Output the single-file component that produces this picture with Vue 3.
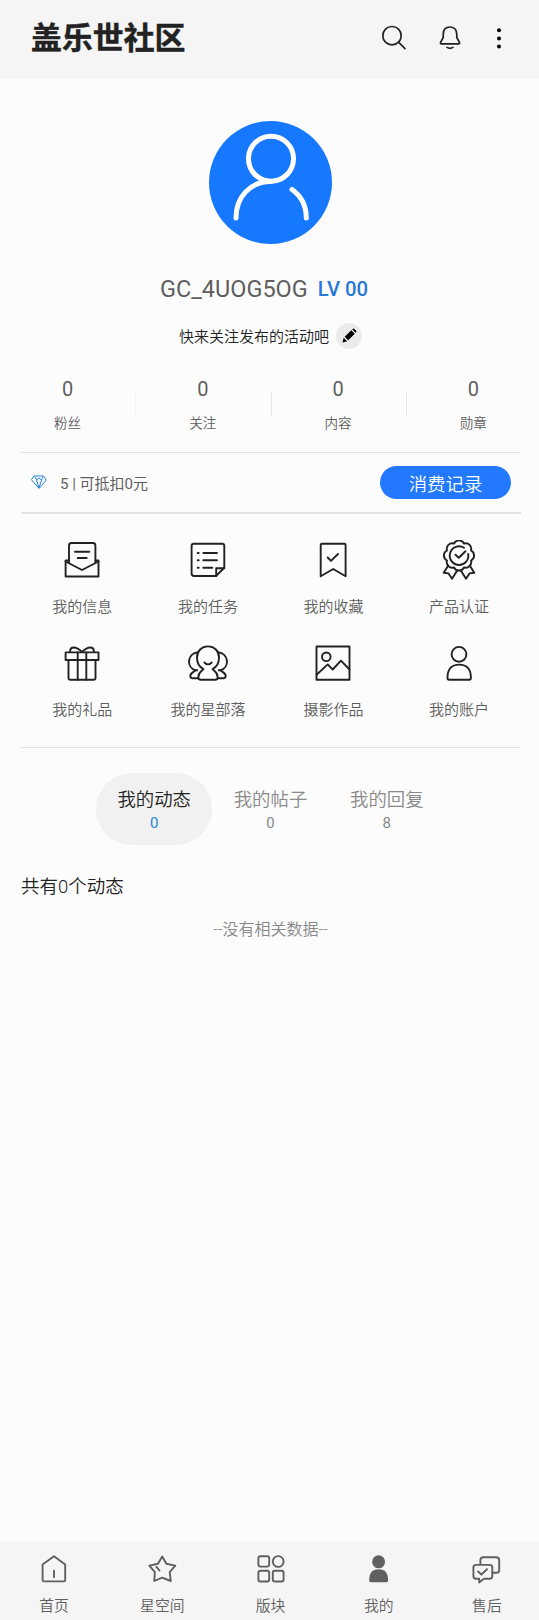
<script setup>
import { ref } from "vue";

const stats = [
  { label: "粉丝", value: 0 },
  { label: "关注", value: 0 },
  { label: "内容", value: 0 },
  { label: "勋章", value: 0 },
];

const menus = [
  {
    label: "我的信息",
    paths: [
      "M7 22.5V5.5Q7 3 9.5 3H31Q33.4 3 33.4 5.5V22.5",
      "M7 20.5H3.6V36.5H36.5V20.5H33.4",
      "M3.6 21.5L20 30L36.5 21.5",
      "M13 11.8H27.3M15.7 18H24.7",
    ],
  },
  {
    label: "我的任务",
    paths: [
      "M28 36H6Q3.6 36 3.6 33.6V6Q3.6 3.8 6 3.8H34Q36.3 3.8 36.3 6V27.8Z",
      "M28.2 36V28.2H36.3",
      "M9.7 13H10.7M15.3 13H29M9.7 20.3H10.7M15.3 20.3H29M9.7 27.7H10.7M15.3 27.7H24.3",
    ],
  },
  {
    label: "我的收藏",
    paths: ["M7.7 36.3V5Q7.7 3.7 9 3.7H31.4Q32.6 3.7 32.6 5V36.3L20.2 29Z", "M14.7 17.5L18 20.9L25 14"],
  },
  {
    label: "产品认证",
    paths: [
      "M15 3.5A5.6 5.6 0 0 1 25 3.5A5.6 5.6 0 0 1 32 10.5A5.6 5.6 0 0 1 32 20.5A5.6 5.6 0 0 1 25 27.5A5.6 5.6 0 0 1 15 27.5A5.6 5.6 0 0 1 8 20.5A5.6 5.6 0 0 1 8 10.5A5.6 5.6 0 0 1 15 3.5",
      "M25 7.8A9.3 9.3 0 1 0 29.2 14",
      "M16.5 14.7L19.8 17.7L26.5 11.3",
      "M9.3 25.5L4.7 32.7L9.5 33.4L13 38.7L18.5 30",
      "M30.7 25.5L35.3 32.7L30.5 33.4L27 38.7L21.5 30",
    ],
  },
  {
    label: "我的礼品",
    paths: [
      "M3.6 9.4H36.5V17H3.6Z",
      "M6.5 17V35.3Q6.5 36.7 8 36.7H32Q33.5 36.7 33.5 35.3V17",
      "M15.7 9.4V36.7M24.3 9.4V36.7",
      "M8 9C8 3 14 3 20 9C26 3 32 3 32 9",
    ],
  },
  {
    label: "我的星部落",
    paths: [
      "M15.3 26C11.5 24 9 19.3 9 14.5C9 8 13.5 3.4 20 3.4S31 8 31 14.5C31 19.3 28.5 24 24.7 26",
      "M15.3 26C13.5 29 10.3 29 10.3 34.5Q10.3 36.8 13 36.8H27Q29.7 36.8 29.7 34.5C29.7 29 26.5 29 24.7 26",
      "M16.4 19.5Q20 23.3 23.7 19.5",
      "M10 9.3C-1 10.5 -2 24.5 7.7 27.3C5 29.5 2.3 30 2.3 33Q2.3 35.2 4.5 35.2H10",
      "M30 9.3C41 10.5 42 24.5 32.3 27.3C35 29.5 37.7 30 37.7 33Q37.7 35.2 35.5 35.2H30",
      "M7.7 27.3H9.3M30.7 27.3H32.3",
    ],
  },
  {
    label: "摄影作品",
    paths: [
      "M3.5 3.5H36.5V36.8H3.5Z",
      "M17.6 13.8A4.3 4.3 0 1 1 9 13.8A4.3 4.3 0 1 1 17.6 13.8",
      "M3.6 31.7L14.7 21.4L19.7 26.5L28 17.7L36.5 26.5",
    ],
  },
  {
    label: "我的账户",
    paths: [
      "M27.4 11.3A7.4 7.4 0 1 1 12.6 11.3A7.4 7.4 0 1 1 27.4 11.3",
      "M8.5 35C8.5 26 12.5 21.6 20.2 21.6S31.9 26 31.9 35Q31.9 36.7 30.3 36.7H10.1Q8.5 36.7 8.5 35Z",
    ],
  },
];

const tabs = [
  { label: "我的动态", count: 0 },
  { label: "我的帖子", count: 0 },
  { label: "我的回复", count: 8 },
];
const activeTab = ref(0);

const navs = [
  {
    label: "首页",
    paths: ["M15 2.3L26.2 10.5V26Q26.2 27.4 24.8 27.4H5Q3.6 27.4 3.6 26V10.5Z", "M15 16.8V23.2"],
  },
  {
    label: "星空间",
    paths: [
      "M15.2 2.5L19.4 9.8L28.3 11.6L22.7 18.2L23.8 27L15.2 23.6L7.2 27L7.9 18.2L2.3 11.6L11 9.8Z",
      "M9.5 12.8L12.5 16.5",
    ],
  },
  {
    label: "版块",
    paths: [
      "M4.4 2.3H11.2Q13.2 2.3 13.2 4.3V10.6Q13.2 12.6 11.2 12.6H4.4Q2.4 12.6 2.4 10.6V4.3Q2.4 2.3 4.4 2.3Z",
      "M4.4 16.7H11.2Q13.2 16.7 13.2 18.7V25.5Q13.2 27.5 11.2 27.5H4.4Q2.4 27.5 2.4 25.5V18.7Q2.4 16.7 4.4 16.7Z",
      "M18.8 16.7H25.6Q27.6 16.7 27.6 18.7V25.5Q27.6 27.5 25.6 27.5H18.8Q16.8 27.5 16.8 25.5V18.7Q16.8 16.7 18.8 16.7Z",
      "M27.6 7.5A5.4 5.4 0 1 1 16.8 7.5A5.4 5.4 0 1 1 27.6 7.5",
    ],
  },
  {
    label: "我的",
    filled: true,
    paths: [
      "M21.1 7.8A6.5 6.5 0 1 1 8.1 7.8A6.5 6.5 0 1 1 21.1 7.8",
      "M5.2 26.5C5.2 19 8 15.2 14.6 15.2S24.1 19 24.1 26.5Q24.1 28.2 22.5 28.2H6.8Q5.2 28.2 5.2 26.5Z",
    ],
  },
  {
    label: "售后",
    paths: [
      "M8.4 10V6.2Q8.4 3.3 11.3 3.3H24.3Q27.2 3.3 27.2 6.2V15.9Q27.2 18.8 24.3 18.8H20.5",
      "M4 10.9H17.6Q20.3 10.9 20.3 13.6V22Q20.3 24.7 17.6 24.7H12L7.2 28.4V24.7H4Q1.4 24.7 1.4 22V13.6Q1.4 10.9 4 10.9Z",
      "M6 17.5L9.4 20.5L15 15.2",
    ],
  },
];
</script>

<template>
  <div class="page">
    <header class="header">
      <h1>盖乐世社区</h1>
      <div class="header__icons">
        <svg width="28" height="28" viewBox="0 0 28 28">
          <circle cx="12" cy="12.7" r="9.2" />
          <path d="M18.7 19.4L25 25.7" />
        </svg>
        <svg width="28" height="28" viewBox="0 0 28 28">
          <path d="M14 4C9 4 7.2 7.7 7.2 11.5V14.5L4.6 19.4Q4 20.9 5.5 20.9H22.5Q24 20.9 23.4 19.4L20.8 14.5V11.5C20.8 7.7 19 4 14 4Z" />
          <path d="M11 24.4Q14 26.3 17 24.4" />
        </svg>
        <svg class="more" width="10" height="28" viewBox="0 0 10 28">
          <circle cx="5" cy="7.2" r="2" />
          <circle cx="5" cy="15.4" r="2" />
          <circle cx="5" cy="23.6" r="2" />
        </svg>
      </div>
    </header>

    <main>
      <section class="profile">
        <svg class="avatar" width="123" height="123" viewBox="0 0 123 123">
          <circle cx="61.5" cy="61.5" r="61.5" />
          <g>
            <circle cx="62" cy="37.7" r="22.5" />
            <path d="M27 97C27 76 41 60.5 62 60.5" />
            <path d="M83 68.5C92 75 97.3 85 97.3 97" />
          </g>
        </svg>
        <div class="profile__name">
          <span>GC_4UOG5OG</span>
          <b>LV 00</b>
        </div>
        <div class="profile__sign">
          <span>快来关注发布的活动吧</span>
          <i>
            <svg width="26" height="26" viewBox="0 0 26 26">
              <path d="M6.5 19.5L7.7 14.8L11.2 18.3ZM8.7 13.8L15.3 7.3L18.8 10.8L12.2 17.3ZM16.2 6.4L17 5.7Q17.7 5.2 18.4 5.9L20.2 7.7Q20.8 8.4 20.2 9.1L19.6 9.8Z" />
            </svg>
          </i>
        </div>
      </section>

      <ul class="stats">
        <li v-for="item in stats" :key="item.label">
          <strong>{{ item.value }}</strong>
          <span>{{ item.label }}</span>
        </li>
      </ul>

      <div class="points">
        <svg width="16" height="15" viewBox="0 0 16 15">
          <path d="M3.5 1H12.5L15.3 5L8 13.5L0.7 5Z" />
          <path d="M4.2 2L5.5 5L8 13L10.5 5L11.8 2M5.5 5L8 3L10.5 5" />
        </svg>
        <span>5 | 可抵扣0元</span>
        <button>消费记录</button>
      </div>

      <div class="menu">
        <div v-for="item in menus" :key="item.label" class="menu__item">
          <svg width="40" height="40" viewBox="0 0 40 40">
            <path v-for="d in item.paths" :key="d" :d="d" />
          </svg>
          <span>{{ item.label }}</span>
        </div>
      </div>

      <div class="tabs">
        <div
          v-for="(tab, index) in tabs"
          :key="tab.label"
          class="tab"
          :class="{ 'is-active': activeTab === index }"
          @click="activeTab = index"
        >
          <span>{{ tab.label }}</span>
          <em>{{ tab.count }}</em>
        </div>
      </div>

      <p class="total">共有0个动态</p>
      <p class="empty">--没有相关数据--</p>
    </main>

    <nav class="nav">
      <div v-for="item in navs" :key="item.label" class="nav__item">
        <svg :class="{ filled: item.filled }" width="30" height="30" viewBox="0 0 30 30">
          <path v-for="d in item.paths" :key="d" :d="d" />
        </svg>
        <span>{{ item.label }}</span>
      </div>
    </nav>
  </div>
</template>

<style>
body {
  margin: 0;
  background: #fcfcfc;
}
</style>

<style scoped>
.page {
  display: flex;
  flex-direction: column;
  width: 539px;
  height: 1620px;
  overflow: hidden;
  background: #fcfcfc;
  color: #5f5f5f;
  font-family: Roboto, "Noto Sans CJK SC", sans-serif;
  font-weight: 350;
}
main {
  flex: 1;
}
svg {
  flex: none;
  fill: none;
  stroke: #222;
  stroke-width: 1.9;
  stroke-linecap: round;
  stroke-linejoin: round;
}

/* ヘッダー */
.header {
  display: flex;
  align-items: center;
  justify-content: space-between;
  box-sizing: border-box;
  height: 79px;
  padding: 0 35px 6px 31px;
  background: #f5f5f5;
}
h1 {
  margin: 5px 0 0;
  color: #222;
  font-size: 30.9px;
  font-weight: 700;
  line-height: 40px;
  -webkit-text-stroke: 0.5px #222;
}
.header__icons {
  display: flex;
  gap: 28px;
}
.header__icons svg {
  stroke-width: 1.7;
}
.header__icons .more {
  margin-left: 2px;
  fill: #000;
  stroke: none;
}

/* プロフィール */
.profile {
  display: flex;
  flex-direction: column;
  align-items: center;
  padding-top: 42px;
}
.avatar {
  margin-left: 2px;
  fill: #1677ff;
  stroke: none;
}
.avatar g {
  fill: none;
  stroke: #fff;
  stroke-width: 5;
}
.profile__name {
  display: flex;
  align-items: baseline;
  gap: 10px;
  margin: 30px 11px 0 0;
  line-height: 30px;
  font-size: 23.5px;
  font-weight: 400;
}
.profile__name b {
  position: relative;
  top: -1px;
  color: #2878d8;
  font-size: 20.3px;
  font-weight: 500;
}
.profile__sign {
  display: flex;
  align-items: center;
  gap: 7px;
  height: 26px;
  margin-top: 18px;
  margin-left: 2px;
  color: #222;
  font-size: 15px;
}
.profile__sign span {
  margin-top: -1px;
}
.profile__sign i {
  width: 26px;
  height: 26px;
  border-radius: 50%;
  background: #ebebeb;
}
.profile__sign svg {
  display: block;
  fill: #000;
  stroke: none;
}

/* 統計 */
.stats {
  display: flex;
  margin: 26px -2px 0 0;
  padding: 0;
  list-style: none;
}
.stats li {
  position: relative;
  flex: 1;
  display: flex;
  flex-direction: column;
  align-items: center;
  height: 77px;
}
.stats li + li::before {
  content: "";
  position: absolute;
  left: 0;
  top: 16px;
  width: 1px;
  height: 25px;
  background: #e6e6e6;
}
.stats li:nth-child(2)::before {
  background: #f5f5f5;
}
.stats strong {
  height: 28px;
  font-size: 20px;
  font-weight: 400;
  line-height: 28px;
}
.stats span {
  margin-top: 9px;
  font-size: 13.6px;
  line-height: 22px;
}

/* ポイント */
.points {
  display: flex;
  align-items: center;
  box-sizing: border-box;
  height: 62px;
  margin: 0 18px 0 21px;
  padding: 0 10px 0 10px;
  border-top: 1px solid #e2e3e4;
  border-bottom: 2px solid #e2e3e4;
  font-size: 15px;
}
.points span {
  font-weight: 400;
}
.points svg {
  margin: 0 13px 1px 0;
  stroke: #2584d8;
  stroke-width: 1;
}
.points button {
  width: 131px;
  height: 33px;
  margin-left: auto;
  padding: 0;
  border: none;
  border-radius: 17px;
  background: #2279ff;
  color: #fff;
  font: inherit;
  font-size: 18.4px;
}

/* メニュー */
.menu {
  display: grid;
  grid-template-columns: repeat(4, 125.6px);
  grid-auto-rows: 103px;
  box-sizing: border-box;
  height: 234px;
  margin: 0 18px 0 21px;
  padding-top: 26px;
  border-bottom: 1px solid #e2e3e4;
}
.menu__item {
  display: flex;
  flex-direction: column;
  align-items: center;
  margin-left: -3px;
}
.menu__item span {
  margin-top: 15px;
  font-size: 15px;
  line-height: 24px;
}

/* タブ */
.tabs {
  display: flex;
  justify-content: center;
  margin-top: 25px;
  margin-left: 2px;
}
.tab {
  display: flex;
  flex-direction: column;
  align-items: center;
  box-sizing: border-box;
  width: 116.3px;
  height: 72px;
  padding-top: 13px;
  border-radius: 36px;
  color: #888;
  font-size: 18.4px;
  line-height: 28px;
}
.tab em {
  font-size: 15px;
  font-style: normal;
  font-weight: 400;
  line-height: 18px;
}
.tab.is-active {
  background: #f1f1f1;
  color: #222;
}
.tab.is-active em {
  color: #2584d8;
}
.total {
  margin: 28px 0 0 21px;
  color: #222;
  font-size: 18.5px;
  line-height: 28px;
}
.empty {
  margin: 17px 0 0 2px;
  color: #888;
  font-size: 16px;
  line-height: 24px;
  text-align: center;
}

/* フッター */
.nav {
  display: flex;
  height: 79px;
  margin-right: -2px;
  background: #f5f5f5;
}
.nav__item {
  flex: 1;
  display: flex;
  flex-direction: column;
  align-items: center;
  padding-top: 13px;
}
.nav__item svg {
  stroke: #606060;
}
.nav__item svg.filled {
  fill: #606060;
  stroke: none;
}
.nav__item span {
  margin-top: 10px;
  font-size: 14.8px;
  line-height: 24px;
}
</style>
